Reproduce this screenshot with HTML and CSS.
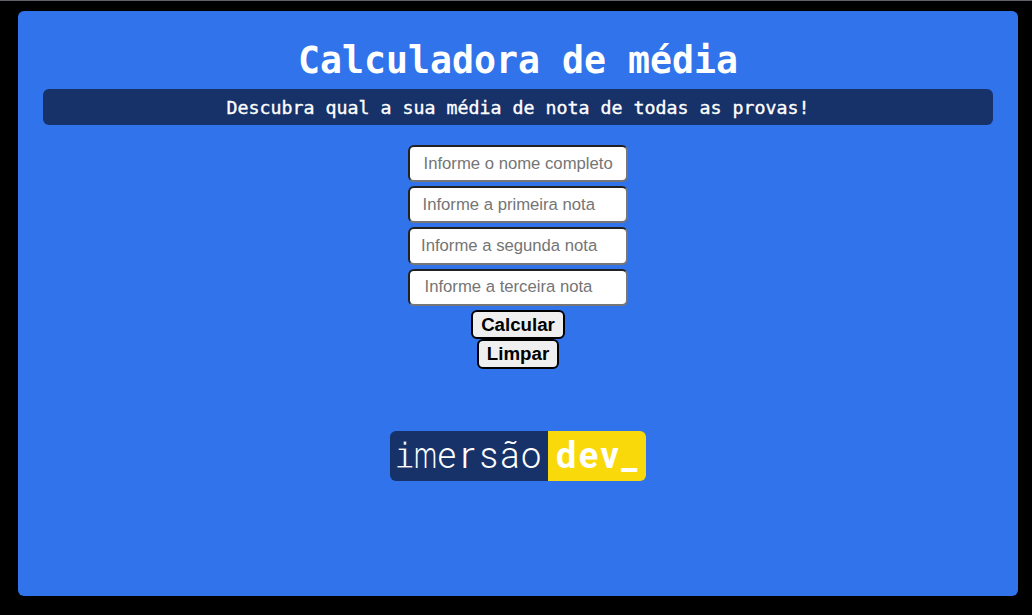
FILE: index.html
```html
<!DOCTYPE html>
<html lang="pt-BR">
<head>
<meta charset="utf-8">
<title>Calculadora de média</title>
<link rel="stylesheet" href="styles.css">
</head>
<body>
<main class="container">
  <h1 class="page-title">Calculadora de média</h1>
  <h2 class="page-subtitle">Descubra qual a sua média de nota de todas as provas!</h2>
  <form class="form">
    <input class="field field-name" type="text" placeholder="Informe o nome completo">
    <input class="field field-first" type="text" placeholder="Informe a primeira nota">
    <input class="field field-second" type="text" placeholder="Informe a segunda nota">
    <input class="field field-third" type="text" placeholder="Informe a terceira nota">
    <button class="button button-calc" type="button">Calcular</button>
    <button class="button button-clear" type="button">Limpar</button>
  </form>
  <div class="logo"><span class="logo-light"><span class="cell cell-slab">i</span><span class="cell cell-narrow">m</span><span class="cell">e</span><span class="cell cell-r">r</span><span class="cell">s</span><span class="cell">ã</span><span class="cell">o</span></span><span class="logo-bold">dev_</span></div>
</main>
</body>
</html>
```

FILE: styles.css
```css
* { box-sizing: border-box; }
body {
  margin: 0;
  height: 615px;
  overflow: hidden;
  background: #000;
  border-top: 1px solid #5f6368;
  padding: 10px 14px 19px 18px;
}
.container {
  height: 585px;
  padding: 28px 25px 0;
  border-radius: 6px;
  background: #3073eb;
  display: flex;
  flex-direction: column;
  align-items: center;
}
.page-title {
  margin: 0;
  height: 50px;
  font: bold 36.54px/44px "DejaVu Sans Mono", monospace;
  color: #fff;
  white-space: pre;
}
.page-subtitle {
  margin: 0;
  width: 100%;
  height: 36px;
  border-radius: 6px;
  background: #163269;
  color: #fff;
  font: 400 18.27px/38px "DejaVu Sans Mono", monospace;
  -webkit-text-stroke: 0.35px #fff;
  text-align: center;
  white-space: pre;
}
.form {
  margin-top: 20px;
  display: flex;
  flex-direction: column;
  align-items: center;
}
.field {
  width: 220px;
  height: 37.2px;
  margin: 0 0 4px;
  padding: 0 0 0 13.5px;
  border: 2px inset #767676;
  border-radius: 6px;
  background: #fff;
  font: 16.7px "Liberation Sans", Arial, sans-serif;
}
.field::placeholder { color: #757575; }
.field-first { padding-left: 12.5px; }
.field-second { padding-left: 11px; }
.field-third { padding-left: 14.5px; }
.button {
  height: 29.5px;
  padding: 0;
  border: 2px solid #000;
  border-radius: 6px;
  background: #efefef;
  color: #000;
  font: bold 18.7px/24px "Liberation Sans", Arial, sans-serif;
}
.button-calc { width: 94px; }
.button-clear { width: 82px; }
.logo {
  margin-top: 62px;
  width: 256px;
  height: 50px;
  border-radius: 6px;
  overflow: hidden;
  display: flex;
  color: #fff;
}
.logo-light {
  width: 158px;
  padding-left: 4px;
  background: #163269;
  font: 300 36px/50px Roboto, sans-serif;
  display: flex;
}
.cell {
  width: 21.1px;
  display: flex;
  justify-content: center;
}
.cell-slab {
  font: 35px/50px "DejaVu Sans Mono", monospace;
  -webkit-text-stroke: 0.8px #163269;
}
.cell-narrow {
  transform: scaleX(0.72);
}
.cell-r { transform: scaleX(1.2); }
.logo-bold {
  width: 98px;
  padding-left: 8px;
  background: #f9d909;
  font: bold 36px/51px Roboto, sans-serif;
  letter-spacing: 2.5px;
}
```
